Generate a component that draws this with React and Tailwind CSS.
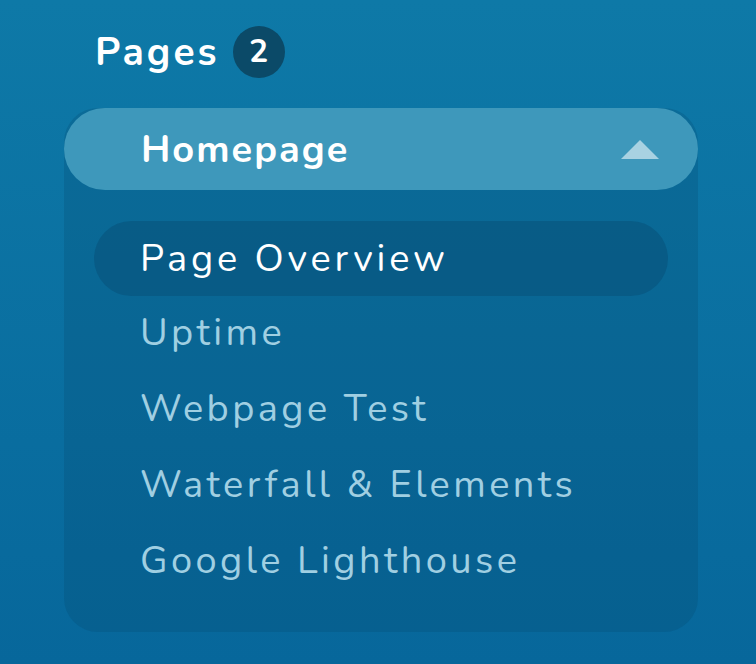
const ITEMS = ['Uptime', 'Webpage Test', 'Waterfall & Elements', 'Google Lighthouse'];

export default function App() {
  return (
    <div
      className="w-[756px] h-[664px] overflow-hidden bg-gradient-to-b from-[#0e79a7] to-[#07679b] pt-[26px]"
      style={{ fontFamily: 'Nunito, Lato, "Open Sans", sans-serif' }}
    >
      <div className="flex items-center h-[52px] pl-[95px] gap-[13px]">
        <span className="text-[39px] font-bold text-white leading-none tracking-[3px]">Pages</span>
        <span className="w-[52px] h-[52px] rounded-full bg-[#0b4a68] text-white text-[32px] font-bold flex items-center justify-center leading-none">
          2
        </span>
      </div>

      <div className="ml-[64px] w-[634px] mt-[30px] rounded-[34px] bg-[#063f62]/20 pb-[32px]">
        <div className="h-[82px] rounded-full bg-[#3e98bb] flex items-center justify-between pl-[77px] pr-[39px]">
          <span className="text-[38px] font-bold text-white tracking-[2px]">Homepage</span>
          <svg width="38" height="19" viewBox="0 0 38 19">
            <polygon points="19,0 38,19 0,19" fill="#a8d2e2" />
          </svg>
        </div>

        <ul className="mt-[31px] px-[30px]">
          <li className="h-[75px] rounded-full bg-[#063f62]/30 flex items-center pl-[46px]">
            <span className="text-[38px] text-white tracking-[3.8px]">Page Overview</span>
          </li>
          {ITEMS.map((item) => (
            <li key={item} className="h-[76px] flex items-center pl-[46px] pb-[3px]">
              <span className="text-[38px] text-[#a0cfe2] tracking-[3.4px]">{item}</span>
            </li>
          ))}
        </ul>
      </div>
    </div>
  );
}
